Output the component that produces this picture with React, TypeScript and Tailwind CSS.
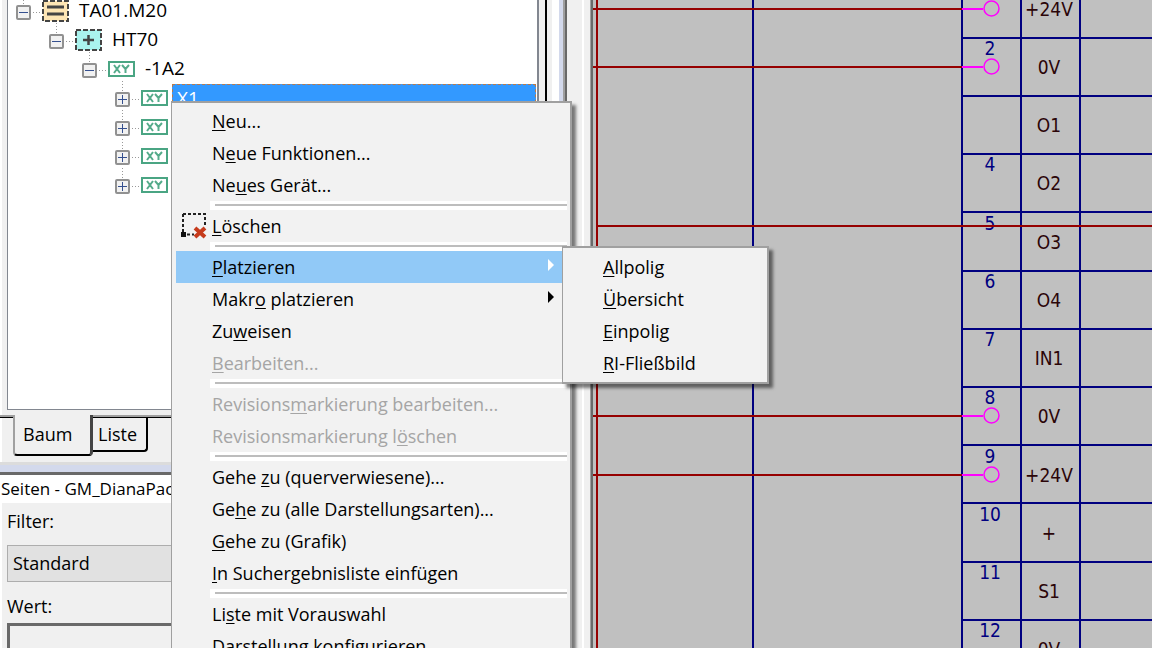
import { clsx } from 'clsx'

type TreeIconKind = 'plant' | 'location' | 'terminal'

interface TreeNode {
    label: string
    level: number
    icon: TreeIconKind
    open: boolean
    selected?: boolean
}

interface MenuEntry {
    // '&' marks the access key
    label: string
    disabled?: boolean
    active?: boolean
    submenu?: boolean
    icon?: boolean
}

const treeNodes: TreeNode[] = [
    { label: 'TA01.M20', level: 0, icon: 'plant', open: true },
    { label: 'HT70', level: 1, icon: 'location', open: true },
    { label: '-1A2', level: 2, icon: 'terminal', open: true },
    { label: 'X1', level: 3, icon: 'terminal', open: false, selected: true },
    { label: '', level: 3, icon: 'terminal', open: false },
    { label: '', level: 3, icon: 'terminal', open: false },
    { label: '', level: 3, icon: 'terminal', open: false },
]

const levelPadding = ['pl-[8px]', 'pl-[41px]', 'pl-[74px]', 'pl-[107px]']

const menuGroups: MenuEntry[][] = [
    [{ label: '&Neu...' }, { label: 'N&eue Funktionen...' }, { label: 'Ne&ues Gerät...' }],
    [{ label: '&Löschen', icon: true }],
    [
        { label: '&Platzieren', submenu: true, active: true },
        { label: 'Makr&o platzieren', submenu: true },
        { label: 'Zu&weisen' },
        { label: '&Bearbeiten...', disabled: true },
    ],
    [
        { label: 'Revisions&markierung bearbeiten...', disabled: true },
        { label: 'Revisionsmarkierung l&öschen', disabled: true },
    ],
    [
        { label: 'Gehe &zu (querverwiesene)...' },
        { label: 'Ge&he zu (alle Darstellungsarten)...' },
        { label: '&Gehe zu (Grafik)' },
        { label: '&In Suchergebnisliste einfügen' },
    ],
    [{ label: 'Li&ste mit Vorauswahl' }, { label: '&Darstellung konfigurieren...' }],
]

const submenuEntries: MenuEntry[] = [
    { label: '&Allpolig' },
    { label: '&Übersicht' },
    { label: '&Einpolig' },
    { label: '&RI-Fließbild' },
]

const terminals = [
    { no: '', name: '+24V', y: 9, wired: true },
    { no: '2', name: '0V', y: 67, wired: true },
    { no: '', name: 'O1', y: 125 },
    { no: '4', name: 'O2', y: 183 },
    { no: '5', name: 'O3', y: 242 },
    { no: '6', name: 'O4', y: 300 },
    { no: '7', name: 'IN1', y: 358 },
    { no: '8', name: '0V', y: 416, wired: true },
    { no: '9', name: '+24V', y: 475, wired: true },
    { no: '10', name: '+', y: 533 },
    { no: '11', name: 'S1', y: 591 },
    { no: '12', name: '0V', y: 649 },
]

const rowLines = [38, 96, 154, 212, 271, 329, 387, 445, 503, 562, 620]

function AccessLabel({ text }: { text: string }) {
    const at = text.indexOf('&')
    return (
        <span className="whitespace-nowrap">
            {text.slice(0, at)}
            <span className="underline decoration-1 underline-offset-2">{text[at + 1]}</span>
            {text.slice(at + 2)}
        </span>
    )
}

function TreeIcon({ kind }: { kind: TreeIconKind }) {
    if (kind === 'terminal') {
        return (
            <svg width="27" height="29" viewBox="0 0 27 29">
                <rect x="1" y="7" width="25" height="14" fill="#fff" stroke="#4aa583" strokeWidth="2" />
                <path d="M6 10l6 8M12 10l-6 8M14 10l3.500 4L21 10M17.500 14v4" fill="none" stroke="#55ab8b" strokeWidth="2" />
            </svg>
        )
    }
    return (
        <svg width="27" height="29" viewBox="0 0 27 29">
            <rect
                x="1"
                y="4"
                width="25"
                height="20"
                fill={kind === 'plant' ? '#fde5b4' : '#aaf3ee'}
                stroke="#444"
                strokeWidth="2"
                strokeDasharray="5 2"
            />
            {kind === 'plant' ? (
                <path d="M5 10h17M5 17h17" stroke="#444" strokeWidth="3" />
            ) : (
                <path d="M8 14h11M13.500 9v10" stroke="#444" strokeWidth="2.500" />
            )}
        </svg>
    )
}

function Expander({ open }: { open: boolean }) {
    return (
        <button type="button" aria-label={open ? 'Zuklappen' : 'Aufklappen'} className="block shrink-0">
            <svg width="26" height="29" viewBox="0 0 26 29" className="overflow-visible">
                <path d="M7.500 -3v11" stroke="#999" strokeDasharray="1 2" />
                <path d="M17 15.500h9" stroke="#999" strokeDasharray="1 2" />
                <rect x="1" y="9" width="13" height="13" rx="1" fill="#f1f1f1" stroke="#919191" strokeWidth="2" />
                <path d={open ? 'M3 15.500h9' : 'M3 15.500h9M7.500 11v9'} stroke="#35508f" />
            </svg>
        </button>
    )
}

function Tree() {
    return (
        <ul className="-mt-[3px] text-[19px]">
            {treeNodes.map((node, i) => (
                <li key={i} className={clsx('flex h-[29px] items-stretch', levelPadding[node.level])}>
                    <Expander open={node.open} />
                    <span className="shrink-0">
                        <TreeIcon kind={node.icon} />
                    </span>
                    <span
                        className={clsx(
                            'leading-[27px] whitespace-nowrap',
                            node.selected
                                ? 'mr-px ml-1 flex-1 border border-dashed border-[#b87a4a] bg-[#3399ff] pl-1 text-white'
                                : 'pl-[10px]',
                        )}
                    >
                        {node.label}
                    </span>
                </li>
            ))}
        </ul>
    )
}

function DockPanel() {
    return (
        <div className="flex min-w-0 flex-1 flex-col border-l-2 border-white bg-[#f0f0f0]">
            <div className="ml-[5px] flex h-[410px] shrink-0 pr-[6px]">
                <div className="flex-1 border-r-2 border-b border-l border-[#828790] bg-white">
                    <Tree />
                </div>
            </div>

            {/* Tabs */}
            <div className="flex h-[52px] shrink-0 items-start pt-[5px] text-[18px]">
                <div className="-ml-[2px] h-[3px] w-[13px] border-t-2 border-b border-t-[#a0a0a0] border-b-black" />
                <button
                    type="button"
                    className="h-[41px] w-20 rounded-b border-r-3 border-b-2 border-l-2 border-r-[#444] border-b-black border-l-[#a0a0a0] pl-2 text-left"
                >
                    Baum
                </button>
                <div className="flex-1 border-t-2 border-[#a0a0a0]">
                    <div className="border-t border-black">
                        <button
                            type="button"
                            className="block h-[34px] w-[55px] rounded-br border-r-2 border-b-2 border-black pl-[5px] text-left"
                        >
                            Liste
                        </button>
                    </div>
                </div>
            </div>

            {/* Splitter */}
            <div className="-ml-[2px] h-[3px] shrink-0 bg-[#dcdcdc]" />
            <div className="-ml-[2px] h-[10px] shrink-0 border-b-3 border-[#696969] bg-[#d3d9ec]" />

            <h2 className="-ml-[2px] h-[28px] shrink-0 bg-white pl-px text-[17px] leading-[28px] whitespace-nowrap">
                Seiten - GM_DianaPac
            </h2>
            <form className="flex flex-col pl-[5px] text-[18px]">
                <label htmlFor="filter" className="h-[42px] leading-[36px]">
                    Filter:
                </label>
                <select id="filter" className="h-[37px] appearance-none border border-[#adadad] bg-[#e1e1e1] pl-[5px]">
                    <option>Standard</option>
                </select>
                <label htmlFor="wert" className="h-[41px] leading-[48px]">
                    Wert:
                </label>
                <input
                    id="wert"
                    type="text"
                    className="h-[37px] border-t-3 border-l-3 border-[#696969] bg-[#f0f0f0] px-1"
                />
            </form>
        </div>
    )
}

function DockEdge() {
    return (
        <div className="flex shrink-0">
            <div className="w-[2px] bg-black" />
            <div className="w-[5px] bg-[#f0f0f0]" />
            <div className="w-[7px] bg-white" />
            <div className="w-[4px] bg-[#d3d9ec]" />
            <div className="w-[2px] bg-[#a0a0a0]" />
            <div className="w-[2px] bg-[#696969]" />
            <div className="w-[15px] bg-[#f0f0f0]" />
            <div className="w-[2px] bg-white" />
            <div className="w-[6px] bg-[#f0f0f0]" />
            <div className="w-px bg-[#a0a0a0]" />
            <div className="w-[2px] bg-[#696969]" />
        </div>
    )
}

function Schematic() {
    return (
        <svg width="100%" height="100%" className="block font-['DejaVu_Sans_Condensed','DejaVu_Sans',sans-serif]">
            <g stroke="#000080" strokeWidth="2">
                <line x1="160" y1="0" x2="160" y2="100%" />
                <line x1="369" y1="0" x2="369" y2="100%" />
                <line x1="428" y1="0" x2="428" y2="100%" />
                <line x1="487" y1="0" x2="487" y2="100%" />
                {rowLines.map((y) => (
                    <line key={y} x1="369" y1={y} x2="100%" y2={y} />
                ))}
            </g>

            {terminals.map((t) => (
                <g key={t.y} textAnchor="middle" fontSize="19">
                    <text x="397" y={t.y - 12} fill="#000080">
                        {t.no}
                    </text>
                    <text x="456" y={t.y + 7} fill="#2b0508">
                        {t.name}
                    </text>
                    {t.wired && (
                        <>
                            <line x1="0" y1={t.y} x2="369" y2={t.y} stroke="#960000" strokeWidth="2" />
                            <line x1="369" y1={t.y} x2="390" y2={t.y} stroke="#f0f" strokeWidth="2" />
                            <circle cx="398.500" cy={t.y - 0.5} r="7.500" fill="none" stroke="#f0f" strokeWidth="1.500" />
                        </>
                    )}
                </g>
            ))}

            <g stroke="#960000" strokeWidth="2">
                <line x1="4" y1="0" x2="4" y2="100%" />
                <line x1="4" y1="226" x2="100%" y2="226" />
            </g>
        </svg>
    )
}

function DeleteIcon() {
    return (
        <svg width="36" height="32" viewBox="0 0 36 32">
            <path d="M7 4h22v12M7 4v19M11 24.500h7" fill="none" stroke="#222" strokeWidth="2" strokeDasharray="3 2" />
            <rect x="5" y="22" width="5" height="5" fill="#111" />
            <path d="M19 18l10 9M29 18l-10 9" stroke="#c63b1c" strokeWidth="4" />
        </svg>
    )
}

function MenuItem({ entry }: { entry: MenuEntry }) {
    return (
        <button
            type="button"
            role="menuitem"
            disabled={entry.disabled}
            className={clsx(
                'flex h-8 w-full items-center text-left',
                entry.disabled ? 'text-[#a5a5a5]' : 'text-black',
                entry.active && 'bg-[#91c9f7]',
            )}
        >
            <span className="w-9 shrink-0">{entry.icon && <DeleteIcon />}</span>
            <AccessLabel text={entry.label} />
            {entry.submenu && (
                <svg width="8" height="14" viewBox="0 0 8 14" className="mr-3 mb-1 ml-auto">
                    <path d="M1 1l6 6-6 6z" fill={entry.active ? '#fff' : '#000'} />
                </svg>
            )}
        </button>
    )
}

function ContextMenu() {
    return (
        <div
            role="menu"
            className="absolute top-[101px] left-[171px] w-[401px] border border-t-2 border-r-2 border-[#a0a0a0] bg-[#f2f2f2] py-[2px] pr-[3px] pl-1 shadow-[4px_4px_3px_rgba(0,0,0,0.5)]"
        >
            {menuGroups.map((group, i) => (
                <div key={i}>
                    {i > 0 && (
                        <div className="ml-[34px] h-[9px] bg-white pt-[3px] pl-[5px]">
                            <div className="h-[2px] bg-[#bdbdbd]" />
                        </div>
                    )}
                    {group.map((entry) => (
                        <MenuItem key={entry.label} entry={entry} />
                    ))}
                </div>
            ))}
        </div>
    )
}

function Submenu() {
    return (
        <div
            role="menu"
            className="absolute top-[246px] left-[562px] w-[207px] border border-t-2 border-r-2 border-b-2 border-[#a0a0a0] bg-[#f2f2f2] py-[3px] pl-1 shadow-[4px_4px_3px_rgba(0,0,0,0.5)]"
        >
            {submenuEntries.map((entry) => (
                <MenuItem key={entry.label} entry={entry} />
            ))}
        </div>
    )
}

export default function App() {
    return (
        <div className="relative flex h-screen overflow-hidden bg-[#c0c0c0] font-['Open_Sans','Noto_Sans',sans-serif] text-[18px] text-black">
            <div className="flex w-[593px] shrink-0">
                <DockPanel />
                <DockEdge />
            </div>
            <main className="min-w-0 flex-1">
                <Schematic />
            </main>
            <ContextMenu />
            <Submenu />
        </div>
    )
}
